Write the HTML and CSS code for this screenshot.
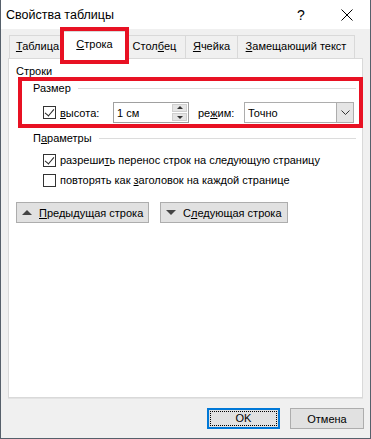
FILE: index.html
```html
<!DOCTYPE html>
<html lang="ru">
<head>
    <meta charset="UTF-8">
    <title>Свойства таблицы</title>
    <link rel="stylesheet" href="styles.css">
</head>
<body>
    <div class="window">
        <div class="titlebar">
            <span class="title">Свойства таблицы</span>
            <span class="tb-btn help">?</span>
            <span class="tb-btn close">
                <svg width="12" height="12" viewBox="0 0 12 12"><path d="M0.5 0.5 L11.5 11.5 M11.5 0.5 L0.5 11.5" stroke="#000" stroke-width="1" fill="none"/></svg>
            </span>
        </div>
        <div class="client">
            <div class="tabs">
                <div class="tab t1"><u>Т</u>аблица</div>
                <div class="tab t2 active"><u>С</u>трока</div>
                <div class="tab t3">Стол<u>б</u>ец</div>
                <div class="tab t4"><u>Я</u>чейка</div>
                <div class="tab t5"><u>З</u>амещающий текст</div>
            </div>
            <div class="panel">
                <div class="section-title">Строки</div>
                <div class="group size-group">
                    <div class="group-head"><span>Размер</span><span class="rule"></span></div>
                    <div class="size-row">
                        <span class="check checked"></span>
                        <span class="lbl-height"><u>в</u>ысота:</span>
                        <div class="spin">
                            <span class="spin-value">1 см</span>
                            <span class="spin-btns">
                                <span class="spin-btn up"></span>
                                <span class="spin-btn down"></span>
                            </span>
                        </div>
                        <span class="lbl-mode">ре<u>ж</u>им:</span>
                        <div class="select">
                            <span class="select-value">Точно</span>
                            <span class="select-arrow">
                                <svg width="9" height="5" viewBox="0 0 9 5"><path d="M0.5 0.5 L4.5 4.5 L8.5 0.5" stroke="#333" stroke-width="1" fill="none"/></svg>
                            </span>
                        </div>
                    </div>
                </div>
                <div class="group params-group">
                    <div class="group-head"><span>П<u>а</u>раметры</span><span class="rule"></span></div>
                    <div class="check-row"><span class="check checked"></span><span>разреши<u>т</u>ь перенос строк на следующую страницу</span></div>
                    <div class="check-row"><span class="check"></span><span>повторять как <u>з</u>аголовок на каждой странице</span></div>
                </div>
                <div class="nav-buttons">
                    <div class="button nav prev"><span class="tri up"></span><span><u>П</u>редыдущая строка</span></div>
                    <div class="button nav next"><span class="tri down"></span><span>С<u>л</u>едующая строка</span></div>
                </div>
            </div>
            <div class="footer">
                <div class="button ok"><span class="focus">OK</span></div>
                <div class="button cancel">Отмена</div>
            </div>
        </div>
    </div>
</body>
</html>
```

FILE: styles.css
```css
body {
    margin: 0;
    font-family: "Liberation Sans", Arial, sans-serif;
    font-size: 11px;
    color: #000;
}
u {
    text-decoration: underline;
    text-underline-offset: 1px;
}
.window {
    width: 369px;
    height: 438px;
    border: 1px solid #56606b;
    border-top: none;
    display: flex;
    flex-direction: column;
    background: #f0f0f0;
}
.titlebar {
    height: 29px;
    background: #fff;
    display: flex;
    align-items: center;
}
.title {
    flex: 1;
    padding-left: 5px;
    font-size: 12.5px;
}
.tb-btn {
    width: 46px;
    height: 29px;
    display: flex;
    align-items: center;
    justify-content: center;
}
.help {
    font-size: 14px;
}
.client {
    flex: 1;
    display: flex;
    flex-direction: column;
    padding: 0 7px 0 7px;
}
.tabs {
    height: 29px;
    display: flex;
    align-items: flex-end;
    padding-left: 1px;
    position: relative;
    z-index: 1;
}
.tab {
    height: 22px;
    line-height: 21px;
    text-align: center;
    border: 1px solid #d9d9d9;
    border-bottom: none;
    border-right: none;
    box-sizing: content-box;
    background: #f0f0f0;
}
.t1 { width: 55px; }
.t2 { width: 57px; }
.t3 { width: 61px; }
.t4 { width: 51px; }
.t5 { width: 116px; border-right: 1px solid #d9d9d9; }
.tab.active {
    width: 61px;
    height: 27px;
    line-height: 25px;
    margin: 0 -2px -1px -2px;
    background: #fff;
    border-right: 1px solid #d9d9d9;
    position: relative;
    z-index: 2;
}
.tab.active::after {
    content: "";
    position: absolute;
    left: -4px;
    top: -5px;
    right: -4px;
    bottom: -5px;
    border: 4px solid #e81123;
}
.tab.active + .tab {
    border-left: none;
}
.panel {
    height: 338px;
    background: #fff;
    border: 1px solid #d9d9d9;
    box-shadow: 0 1px 0 #e3e3e3;
    padding: 0 0 0 7px;
}
.section-title {
    margin-top: 5px;
    line-height: 15px;
}
.group {
    margin-left: 17px;
    margin-right: 6px;
}
.group-head {
    display: flex;
    align-items: center;
    line-height: 15px;
}
.group-head .rule {
    flex: 1;
    height: 1px;
    background: #dcdcdc;
    margin-left: 7px;
}
.size-group {
    position: relative;
    margin-top: 1px;
    padding-top: 1px;
}
.size-group::after {
    content: "";
    position: absolute;
    left: -15px;
    top: -3px;
    right: -7px;
    bottom: -5px;
    border: 4px solid #e81123;
}
.size-row {
    display: flex;
    align-items: center;
    margin-top: 6px;
    padding-left: 10px;
}
.check {
    width: 11px;
    height: 11px;
    border: 1px solid #333;
    background: #fff;
    position: relative;
    flex: none;
}
.check.checked::after {
    content: "";
    position: absolute;
    left: 3px;
    top: 0px;
    width: 4px;
    height: 8px;
    border: solid #222;
    border-width: 0 1px 1px 0;
    transform: rotate(40deg);
}
.lbl-height {
    width: 53px;
    margin-left: 4px;
}
.spin {
    width: 74px;
    height: 19px;
    border: 1px solid #a0a0a0;
    display: flex;
    align-items: center;
}
.spin-value {
    flex: 1;
    padding-left: 3px;
}
.spin-btns {
    width: 15px;
    height: 17px;
    margin-right: 1px;
    display: flex;
    flex-direction: column;
    gap: 1px;
}
.spin-btn {
    flex: 1;
    background: #e5e5e5;
    border: 1px solid #cfcfcf;
    position: relative;
}
.spin-btn::after {
    content: "";
    position: absolute;
    left: 4px;
    border-left: 3px solid transparent;
    border-right: 3px solid transparent;
}
.spin-btn.up::after {
    top: 1px;
    border-bottom: 3px solid #333;
}
.spin-btn.down::after {
    top: 2px;
    border-top: 3px solid #333;
}
.lbl-mode {
    width: 46px;
    margin-left: 9px;
}
.select {
    width: 108px;
    height: 19px;
    border: 1px solid #adadad;
    display: flex;
    align-items: center;
    background: #fff;
}
.select-value {
    flex: 1;
    padding-left: 3px;
}
.select-arrow {
    width: 16px;
    height: 19px;
    background: #e5e5e5;
    border-left: 1px solid #adadad;
    display: flex;
    align-items: center;
    justify-content: center;
}
.params-group {
    margin-top: 8px;
}
.params-group .group-head {
    margin-bottom: 4px;
}
.check-row {
    display: flex;
    align-items: center;
    gap: 4px;
    height: 20px;
    padding-left: 10px;
}
.nav-buttons {
    display: flex;
    gap: 11px;
    margin-top: 12px;
}
.button {
    height: 19px;
    border: 1px solid #adadad;
    background: #e1e1e1;
    display: flex;
    align-items: center;
    justify-content: center;
    box-sizing: content-box;
}
.nav {
    justify-content: flex-start;
}
.prev { width: 131px; }
.next { width: 126px; }
.tri {
    width: 0;
    height: 0;
    margin: 0 7px 0 5px;
    border-left: 5px solid transparent;
    border-right: 5px solid transparent;
}
.tri.up { border-bottom: 5px solid #444; }
.tri.down { border-top: 5px solid #444; }
.footer {
    height: 40px;
    display: flex;
    justify-content: flex-end;
    align-items: flex-start;
    gap: 10px;
    padding-top: 10px;
    box-sizing: border-box;
}
.ok {
    width: 69px;
    height: 17px;
    border: 2px solid #0078d7;
}
.ok .focus {
    width: 65px;
    height: 13px;
    border: 1px dotted #000;
    text-align: center;
    line-height: 13px;
}
.cancel {
    width: 72px;
    margin-right: -1px;
}
```
